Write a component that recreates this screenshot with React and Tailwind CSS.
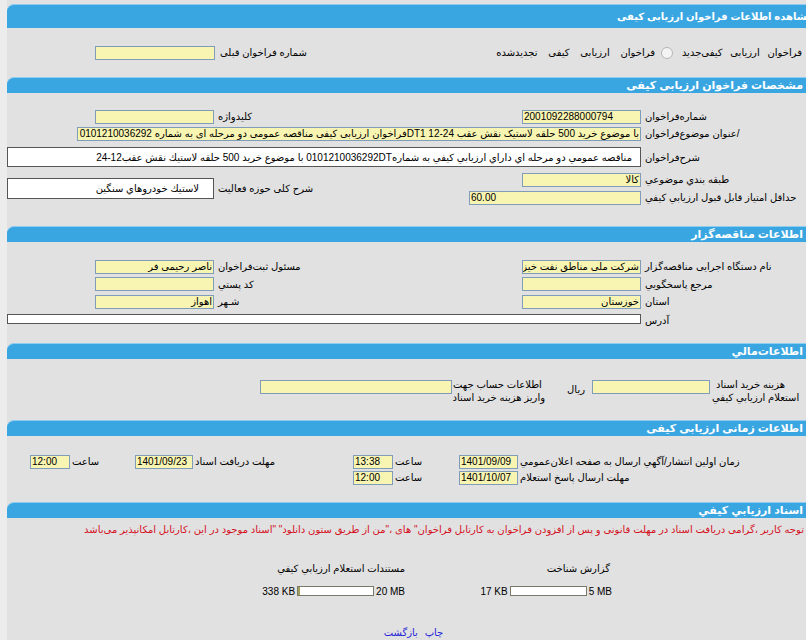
import React from "react";

/* shared pieces */
const Bar = ({ title, big }) => (
  <div
    className={`bg-[#3aa6e1] border-t border-[#8fcdf0] rounded-tl-[7px] text-white font-bold whitespace-nowrap flex items-center ${
      big ? "h-[24px] pr-[7px] text-[10px]" : "h-[16px] pr-[17px] text-[11px]"
    }`}
  >
    <span>{title}</span>
  </div>
);

const Inp = ({ w, children, className = "" }) => (
  <div
    className={`h-[14px] shrink-0 bg-[#f8f5b2] border border-[#7f9db9] text-[10px] leading-[12px] px-[1px] whitespace-nowrap overflow-hidden text-black ${w} ${className}`}
  >
    {children}
  </div>
);

const Label = ({ w, children, className = "" }) => (
  <div className={`shrink-0 text-left whitespace-nowrap ${w} ${className}`}>{children}</div>
);

const Radio = () => (
  <span className="inline-block w-[12px] h-[12px] rounded-full border border-[#b5b5b5] bg-[#f4f4f4] shrink-0" />
);

const Progress = ({ max, used, fill }) => (
  <div className="flex items-center">
    <span dir="ltr">{max}</span>
    <div className="w-[77px] h-[10px] mx-[2px] bg-white border border-[#7a7a6a] flex justify-end">
      <div className={`h-full bg-[#a3a05a] ${fill}`} />
    </div>
    <span dir="ltr">{used}</span>
  </div>
);

export default function App() {
  return (
    <div className="w-[806px] h-[640px] overflow-hidden bg-[#ececec] font-['Liberation_Sans','DejaVu_Sans',sans-serif] text-[10px] text-black">
      <div dir="rtl" className="ml-[7px] w-[813px] pt-[4px] bg-[#e1e1e1] h-full">
        {/* page title */}
        <Bar big title="مشاهده اطلاعات فراخوان ارزیابی کیفی" />

        {/* type of call */}
        <div className="flex items-center h-[17px] mt-[16px] mb-[16px]">
          <div className="w-[300px] shrink-0 flex items-center whitespace-nowrap">
            <Radio />
            <span className="mr-[6px] w-[107px] [word-spacing:5px]">فراخوان ارزیابی کیفی‌جدید</span>
            <span className="mr-[22px] flex"><Radio /></span>
            <span className="mr-[6px] [word-spacing:8px]">فراخوان ارزیابی کیفی تجدیدشده</span>
          </div>
          <Label w="w-[304px]" className="pl-[4px]">شماره فراخوان قبلی</Label>
          <Inp w="w-[120px]" className="mr-[1px]" />
        </div>

        {/* call details */}
        <Bar title="مشخصات فراخوان ارزیابی کیفی" />
        <div className="pt-[15px]">
          <div className="flex items-center h-[17px]">
            <Label w="w-[175px]">شماره‌فراخوان</Label>
            <div className="w-[125px] shrink-0">
              <Inp w="w-[119px]" className="mr-[4px] text-left">2001092288000794</Inp>
            </div>
            <Label w="w-[304px]" className="pl-[2px]">کلیدواژه</Label>
            <Inp w="w-[119px]" className="mr-[2px]" />
          </div>
          <div className="flex items-center h-[17px]">
            <Label w="w-[175px]">/عنوان موضوع‌فراخوان</Label>
            <Inp w="w-[564px]" className="mr-[4px]">
              با موضوع خرید 500 حلقه لاستیک نقش عقب DT1 12-24فراخوان ارزیابی کیفی مناقصه عمومی دو مرحله ای به شماره 0101210036292
            </Inp>
          </div>
          <div className="flex items-center mt-[5px]">
            <Label w="w-[175px]">شرح‌فراخوان</Label>
            <div className="w-[634px] h-[20px] mr-[4px] shrink-0 bg-white border border-[#555] flex items-center pr-[8px] whitespace-nowrap overflow-hidden">
              مناقصه عمومي دو مرحله اي داراي ارزيابي كيفي به شماره0101210036292DT با موضوع خريد 500 حلقه لاستيك نقش عقب12-24
            </div>
          </div>
          <div className="flex items-center mt-[4px]">
            <div className="w-[300px] shrink-0">
              <div className="flex items-center h-[17px]">
                <Label w="w-[175px]">طبقه بندي موضوعي</Label>
                <Inp w="w-[119px]" className="mr-[4px]">كالا</Inp>
              </div>
              <div className="flex items-center h-[17px] mt-[1px]">
                <Label w="w-[175px]">حداقل امتياز قابل قبول ارزيابي كيفي</Label>
                <Inp w="w-[172px]" className="mr-[4px] text-left">60.00</Inp>
              </div>
            </div>
            <Label w="w-[304px]" className="pl-[2px]">شرح کلی حوزه فعالیت</Label>
            <div className="w-[207px] h-[21px] mr-[2px] shrink-0 bg-white border border-[#555] flex items-center pr-[14px] whitespace-nowrap">
              لاستيك خودروهاي سنگين
            </div>
          </div>
        </div>

        {/* tenderer */}
        <div className="mt-[20px]">
          <Bar title="اطلاعات مناقصه‌گزار" />
        </div>
        <div className="pt-[16px]">
          {[
            ["نام دستگاه اجرایی مناقصه‌گزار", "شرکت ملی مناطق نفت خیز جنوب", "مسئول ثبت‌فراخوان", "ناصر رحیمی فر"],
            ["مرجع پاسخگويي", "", "کد پستي", ""],
            ["استان", "خوزستان", "شـهر", "اهواز"],
          ].map(([a, b, c, d]) => (
            <div key={a} className="flex items-center h-[17.5px]">
              <Label w="w-[175px]">{a}</Label>
              <div className="w-[125px] shrink-0">
                <Inp w="w-[119px]" className="mr-[4px]">{b}</Inp>
              </div>
              <Label w="w-[304px]" className="pl-[2px]">{c}</Label>
              <Inp w="w-[119px]" className="mr-[2px]">{d}</Inp>
            </div>
          ))}
          <div className="flex items-center h-[17px]">
            <Label w="w-[175px]" className="pt-[3px]">آدرس</Label>
            <div className="w-[634px] h-[10px] mr-[4px] shrink-0 bg-white border border-[#555]" />
          </div>
        </div>

        {/* financial */}
        <div className="mt-[15px]">
          <Bar title="اطلاعات‌مالي" />
        </div>
        <div className="flex items-start pt-[19px] h-[61px]">
          <Label w="w-[108px]" className="leading-[13px]">
            <div className="pl-[4px]">هزينه خريد اسناد</div>
            <div>استعلام ارزيابي كيفي</div>
          </Label>
          <Inp w="w-[118px]" className="mr-[2px] mt-[2px]" />
          <div className="w-[47px] shrink-0 pr-[7px] mt-[5px] leading-[14px]">ريال</div>
          <Label w="w-[92px]" className="leading-[13px]">
            <div>اطلاعات حساب جهت</div>
            <div>واريز هزينه خريد اسناد</div>
          </Label>
          <Inp w="w-[192px]" className="mr-[1px] mt-[2px]" />
        </div>

        {/* timing */}
        <Bar title="اطلاعات زمانی ارزیابی کیفی" />
        <div className="pt-[18px]">
          <div className="flex items-center h-[16px]">
            <Label w="w-[300px]">زمان اولين انتشار/آگهي ارسال به صفحه اعلان‌عمومي</Label>
            <Inp w="w-[59px]" className="mr-[2px] text-left">1401/09/09</Inp>
            <Label w="w-[64px]">ساعت</Label>
            <Inp w="w-[40px]" className="mr-[2px] text-left">13:38</Inp>
            <Label w="w-[158px]">مهلت دريافت اسناد</Label>
            <Inp w="w-[58px]" className="mr-[2px] text-left">1401/09/23</Inp>
            <Label w="w-[63px]">ساعت</Label>
            <Inp w="w-[40px]" className="mr-[2px] text-left">12:00</Inp>
          </div>
          <div className="flex items-center h-[16px]">
            <Label w="w-[300px]">مهلت ارسال پاسخ استعلام</Label>
            <Inp w="w-[59px]" className="mr-[2px] text-left">1401/10/07</Inp>
            <Label w="w-[64px]">ساعت</Label>
            <Inp w="w-[40px]" className="mr-[2px] text-left">12:00</Inp>
          </div>
        </div>

        {/* documents */}
        <div className="mt-[16px]">
          <Bar title="اسناد ارزيابي كيفي" />
        </div>
        <div className="pr-[16px] pt-[5px] h-[19px] leading-[14px] text-[#d4101e] whitespace-nowrap">
          توجه کاربر ،گرامی دریافت اسناد در مهلت قانونی و پس از افزودن فراخوان به کارتابل فراخوان" های ،"من از طریق ستون دانلود" "اسناد موجود در این ،کارتابل امکانپذیر می‌باشد
        </div>
        <div className="flex mt-[24px] mr-[208px]">
          <div className="w-[207px] shrink-0">
            <div className="h-[14px] pr-[2px]">گزارش شناخت</div>
            <div className="mt-[9px]">
              <Progress max="5 MB" used="17 KB" fill="w-0" />
            </div>
          </div>
          <div className="w-[207px] shrink-0">
            <div className="h-[14px]">مستندات استعلام ارزيابي كيفي</div>
            <div className="mt-[9px]">
              <Progress max="20 MB" used="338 KB" fill="w-[2px]" />
            </div>
          </div>
        </div>
        <div className="text-center mt-[26px] text-[#2424d8]">
          <span>چاپ</span> <span className="mr-[4px]">بازگشت</span>
        </div>
      </div>
    </div>
  );
}
